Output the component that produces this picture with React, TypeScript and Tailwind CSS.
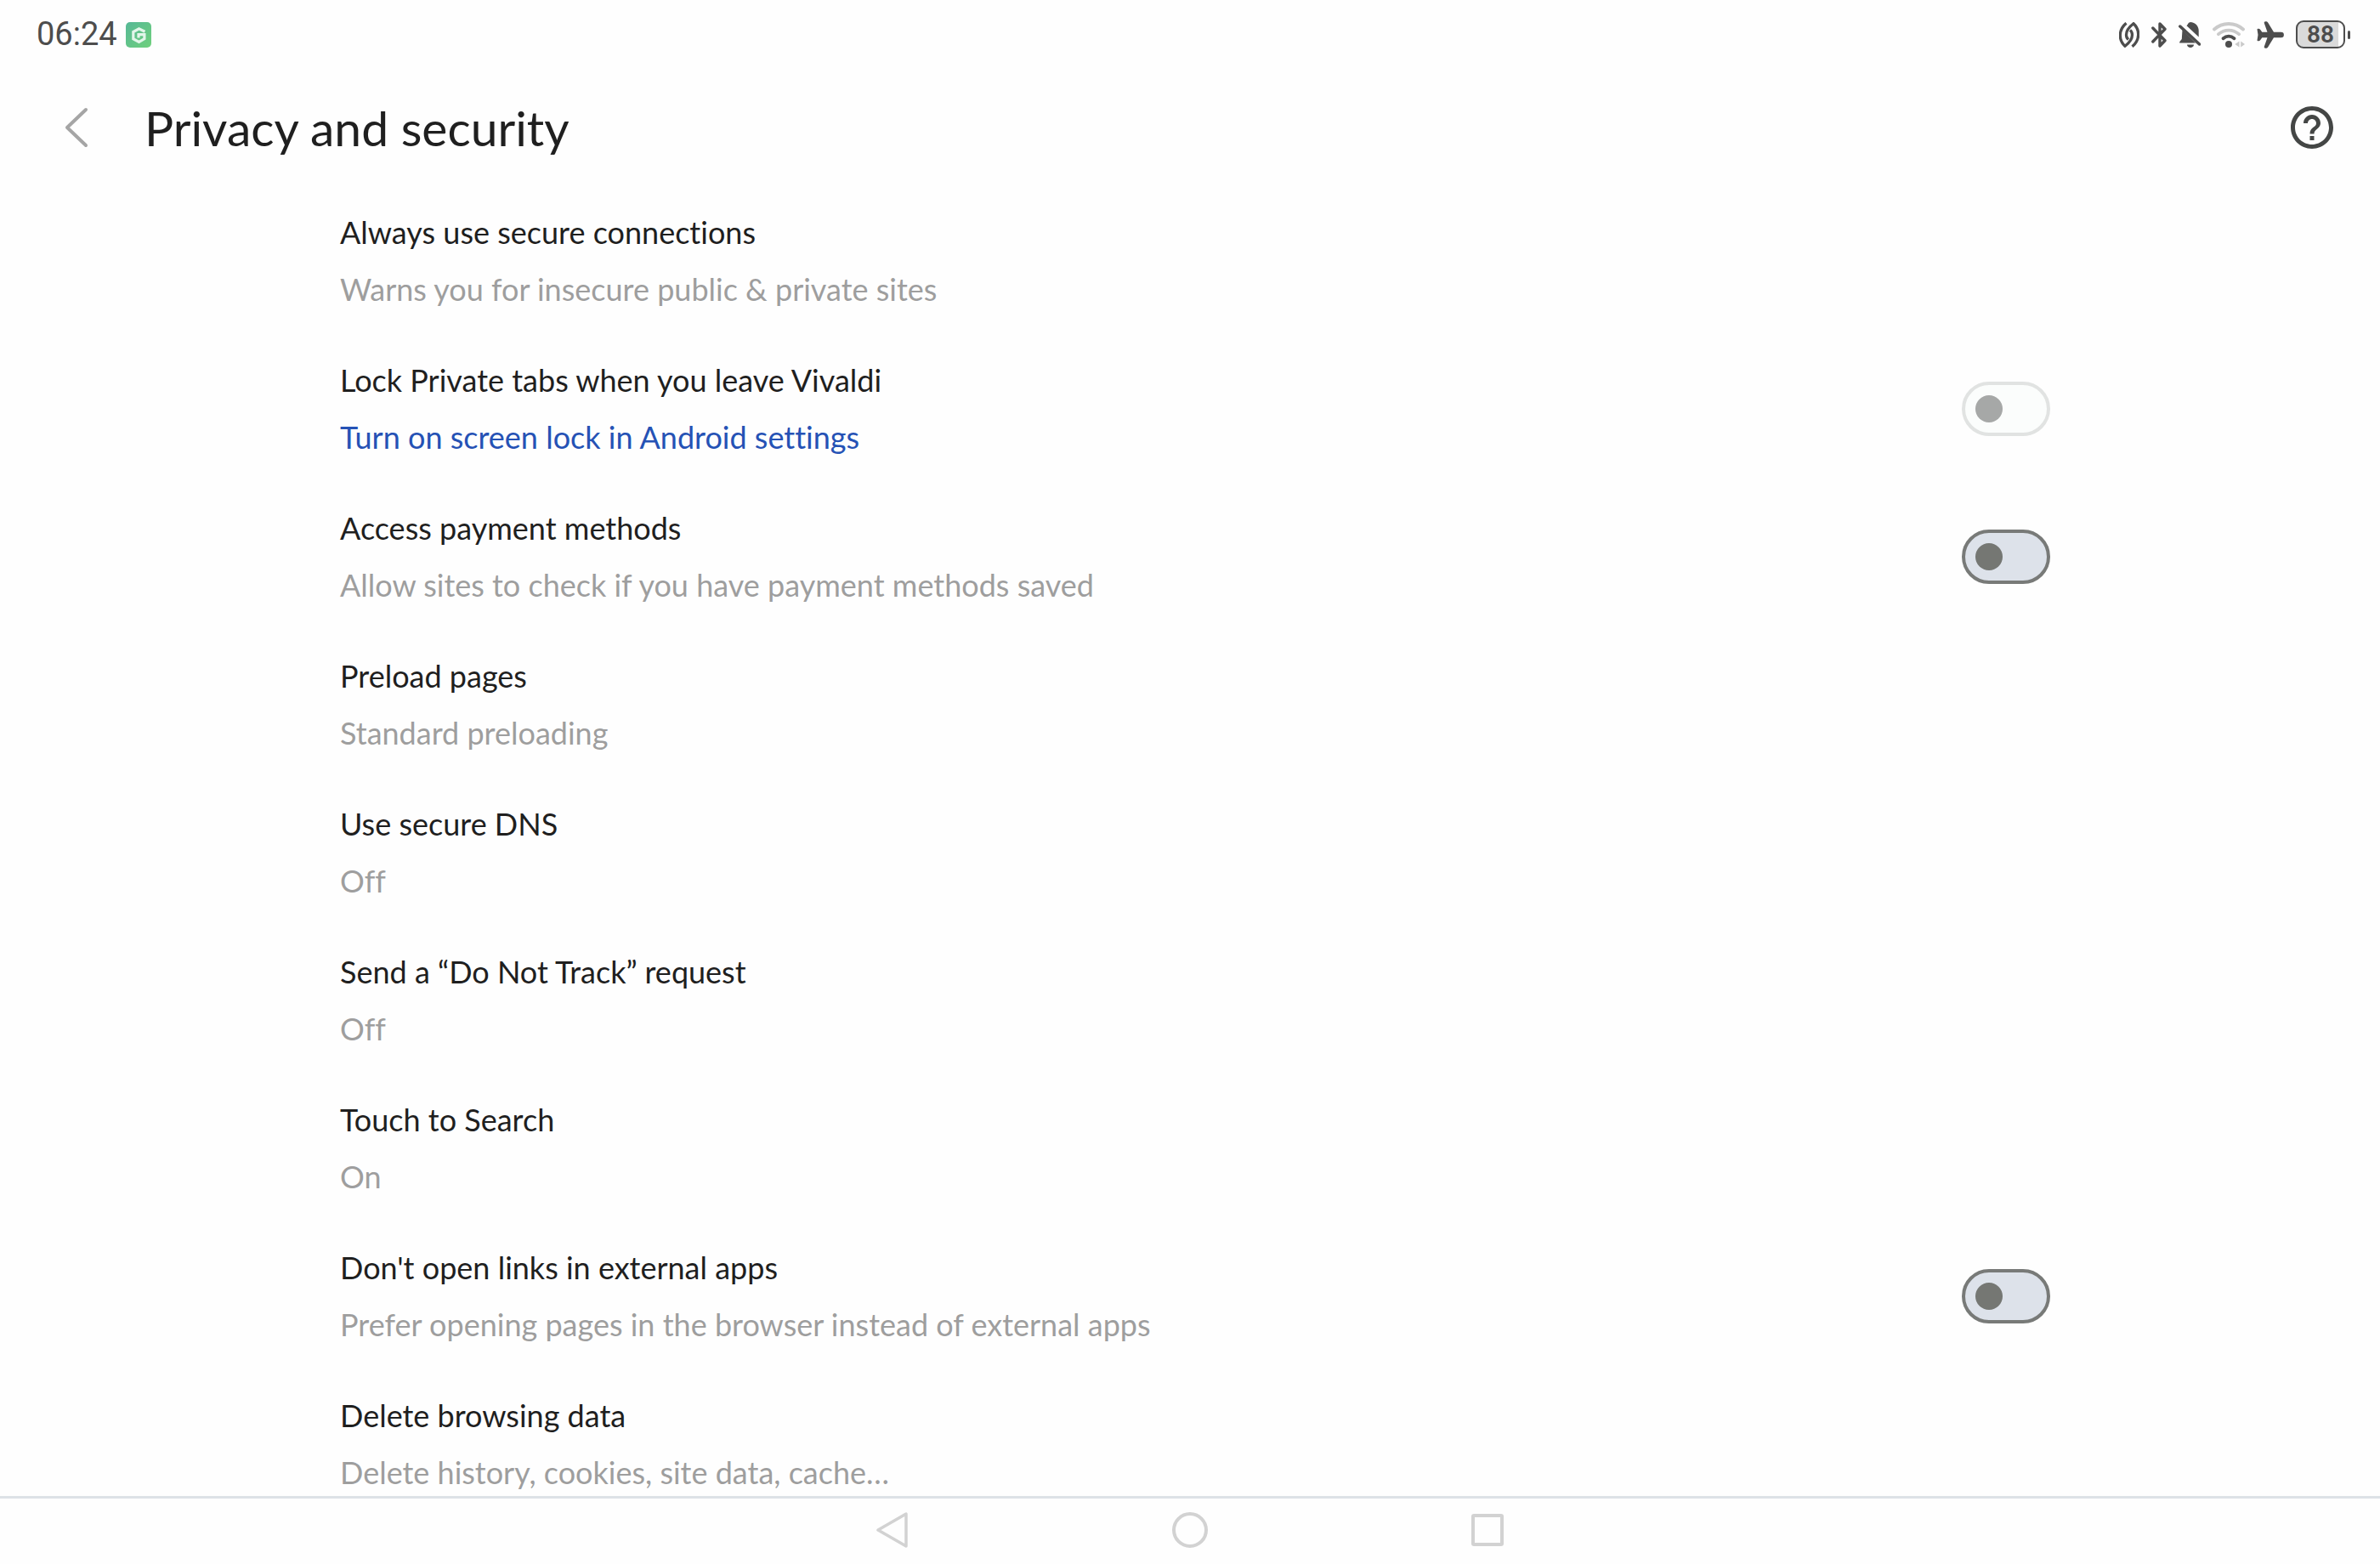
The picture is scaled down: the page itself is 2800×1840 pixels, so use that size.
import { useId, useState } from "react";
import clsx from "clsx";

type Setting = {
  title: string;
  summary: string;
  toggle?: "enabled" | "disabled";
  href?: string;
};

const settings: Setting[] = [
  {
    title: "Always use secure connections",
    summary: "Warns you for insecure public & private sites",
  },
  {
    title: "Lock Private tabs when you leave Vivaldi",
    summary: "Turn on screen lock in Android settings",
    href: "#screen-lock",
    toggle: "disabled",
  },
  {
    title: "Access payment methods",
    summary: "Allow sites to check if you have payment methods saved",
    toggle: "enabled",
  },
  { title: "Preload pages", summary: "Standard preloading" },
  { title: "Use secure DNS", summary: "Off" },
  { title: "Send a “Do Not Track” request", summary: "Off" },
  { title: "Touch to Search", summary: "On" },
  {
    title: "Don't open links in external apps",
    summary: "Prefer opening pages in the browser instead of external apps",
    toggle: "enabled",
  },
  {
    title: "Delete browsing data",
    summary: "Delete history, cookies, site data, cache…",
  },
];

const AppBadge = () => (
  <svg viewBox="0 0 30 30" className="size-[30px]" fill="none">
    <defs>
      <linearGradient id="badge" x1="0" y1="0" x2="1" y2="1">
        <stop offset="0" stopColor="#56b896" />
        <stop offset="1" stopColor="#6fd07c" />
      </linearGradient>
    </defs>
    <rect width="30" height="30" rx="5" fill="url(#badge)" />
    <path
      d="M22.5 11.2 15.5 7.8 8.8 11.5v8.2l6.7 3.8 6.4-3.8v-5H15v3.8"
      stroke="#e3f6ea"
      strokeWidth="3.2"
    />
  </svg>
);

const LinkIcon = () => (
  <svg viewBox="0 0 24 30" className="h-[30px] w-6" fill="none" stroke="currentColor" strokeWidth="3.3">
    <path d="M8.5 1.2C-.8 9-.8 21 7 28.2c5.500-4.200 8.500-9 8.500-13.200 0-2.500-.8-4.200-2.500-5.500" />
    <path d="M15.500 28.800C24.800 21 24.800 9 17 1.800 11.500 6 8.500 10.800 8.500 15c0 2.500.8 4.200 2.500 5.500" />
  </svg>
);

const BluetoothIcon = () => (
  <svg viewBox="0 0 18 30" className="h-[30px] w-[18px]" fill="none" stroke="currentColor" strokeWidth="3.4" strokeLinecap="round" strokeLinejoin="round">
    <path d="M1.8 7 16 21.8 10 28V2l6 6.200L1.800 23" />
  </svg>
);

const BellOffIcon = () => (
  <svg viewBox="0 0 26 30" className="h-[30px] w-[26px]" fill="currentColor">
    <path d="M9.500 4.200C11 3.400 11.200 0 14.500 0 20.500.8 23.700 5.500 23.700 10v7.600z" />
    <path d="M4.500 9 20 24.500H1.200v-1.200L3.800 20z" />
    <path d="M10 26.500h8c0 2-2 3.500-4 3.500s-4-1.500-4-3.500" />
    <path d="M1.800 5 24.500 26" stroke="currentColor" strokeWidth="3.5" strokeLinecap="round" />
  </svg>
);

const WifiIcon = () => (
  <svg viewBox="0 0 38 32" className="h-8 w-[38px]" fill="none" strokeWidth="3.8" strokeLinecap="round">
    <path d="M2 9.500C11.500.8 26.500.8 36 9.500M7 15.200c7-6.200 17-6.200 24 0" stroke="#cacaca" />
    <path d="M12.500 20.300c4-3.400 9-3.400 13 0" stroke="currentColor" />
    <circle cx="19" cy="27" r="4" fill="currentColor" />
    <path d="M26.300 27 31.500 23.500v7zM38 27l-4.800-3.500v7z" fill="#cacaca" />
  </svg>
);

const PlaneIcon = () => (
  <svg viewBox="0 0 32 32" className="size-8" fill="currentColor">
    <path d="M.5 9.500c0-.8 2.700-1 3.400 0L6.300 12.700H12.500L8.800 2.200C8.400 1 9.200.2 10.400.2c1.300 0 2.200.4 2.900 1.500L20 12.700h8.600a3.300 3.300 0 0 1 0 6.600H20L13.300 30.300c-.7 1.100-1.600 1.500-2.900 1.500-1.200 0-2-.8-1.600-2L12.500 19.300H6.300L3.900 22.500c-.7 1-3.400.8-3.400 0L1.500 16z" />
  </svg>
);

const StatusBar = () => (
  <div className="flex h-[81px] shrink-0 items-center justify-between pr-[35px] pl-[43px] font-[Roboto,sans-serif] text-[#4d4d4d]">
    <div className="flex items-center gap-2.5">
      <time className="text-[38px]">06:24</time>
      <AppBadge />
    </div>
    <div className="flex items-center gap-3.5">
      <LinkIcon />
      <BluetoothIcon />
      <BellOffIcon />
      <WifiIcon />
      <PlaneIcon />
      <div className="flex items-center gap-[3px]">
        <div className="flex h-[33px] w-[58px] items-center justify-center rounded-[9px] border-2 border-[#4d4d4d] bg-linear-to-r from-[#dadada] from-88% to-transparent to-88% text-[28px] leading-none font-semibold">
          88
        </div>
        <div className="h-2.5 w-[3px] rounded-full bg-[#4d4d4d]" />
      </div>
    </div>
  </div>
);

const Header = () => (
  <header className="flex h-[139px] shrink-0 items-center justify-between pr-[50px] pb-0.5 pl-[60px]">
    <div className="flex items-center gap-[50px]">
      <button aria-label="Back" className="flex size-[60px] items-center justify-center">
        <svg viewBox="0 0 60 60" className="size-full" fill="none" stroke="#a5a5a5" strokeWidth="4" strokeLinecap="round" strokeLinejoin="round">
          <path d="M41 9 19 30l22 21" />
        </svg>
      </button>
      <h1 className="text-[57px] leading-[72px]">Privacy and security</h1>
    </div>
    <button aria-label="Help">
      <svg viewBox="0 0 24 24" className="size-[60px]" fill="#444645">
        <path d="M11 18h2v-2h-2v2zm1-16C6.480 2 2 6.480 2 12s4.480 10 10 10 10-4.480 10-10S17.520 2 12 2zm0 18c-4.410 0-8-3.590-8-8s3.590-8 8-8 8 3.590 8 8-3.590 8-8 8zm0-14c-2.210 0-4 1.790-4 4h2c0-1.100.9-2 2-2s2 .9 2 2c0 2-3 1.750-3 5h2c0-2.250 3-2.500 3-5 0-2.210-1.790-4-4-4z" />
      </svg>
    </button>
  </header>
);

const SettingRow = ({ title, summary, toggle, href }: Setting) => {
  const id = useId();
  const [on, setOn] = useState(false);

  return (
    <li className="flex items-center justify-between py-5">
      <div className="text-[36px] leading-[67px]">
        {toggle ? <label htmlFor={id}>{title}</label> : <h2>{title}</h2>}
        {href ? (
          <a href={href} className="block text-[#2552b5]">
            {summary}
          </a>
        ) : (
          <p className="text-[#9e9e9e]">{summary}</p>
        )}
      </div>
      {toggle && (
        <input
          id={id}
          type="checkbox"
          role="switch"
          checked={on}
          disabled={toggle === "disabled"}
          onChange={(e) => setOn(e.target.checked)}
          className={clsx(
            "flex h-16 w-[104px] shrink-0 appearance-none items-center rounded-full border-4 px-3",
            "border-[#787a78] bg-[#dde2ea] before:size-8 before:rounded-full before:bg-[#757773]",
            "checked:justify-end checked:bg-[#b9cdf3]",
            "disabled:border-[#e1e3e2] disabled:bg-[#fbfdfc] disabled:before:bg-[#a6a8a7]"
          )}
        />
      )}
    </li>
  );
};

const NavigationBar = () => (
  <nav className="flex h-20 shrink-0 justify-center border-t-3 border-[#dde2e6] pb-1 text-[#d2d2d2]">
    <button aria-label="Back" className="flex w-1/8 items-center justify-center">
      <svg viewBox="0 0 42 42" className="size-[42px]" fill="none" stroke="currentColor" strokeWidth="3.5" strokeLinejoin="round">
        <path d="M37 2v38L4 21z" />
      </svg>
    </button>
    <button aria-label="Home" className="flex w-1/8 items-center justify-center">
      <span className="size-[42px] rounded-full border-4" />
    </button>
    <button aria-label="Recent apps" className="flex w-1/8 items-center justify-center">
      <span className="size-[38px] rounded-[3px] border-4" />
    </button>
  </nav>
);

export default function App() {
  return (
    <div className="flex h-screen flex-col bg-[#fefefe] font-[Lato,sans-serif] text-[#1f1f1f] [font-variant-ligatures:none]">
      <StatusBar />
      <Header />
      <main className="min-h-0 flex-1 overflow-hidden pr-[388px] pl-[400px]">
        <ul>
          {settings.map((setting) => (
            <SettingRow key={setting.title} {...setting} />
          ))}
        </ul>
      </main>
      <NavigationBar />
    </div>
  );
}
